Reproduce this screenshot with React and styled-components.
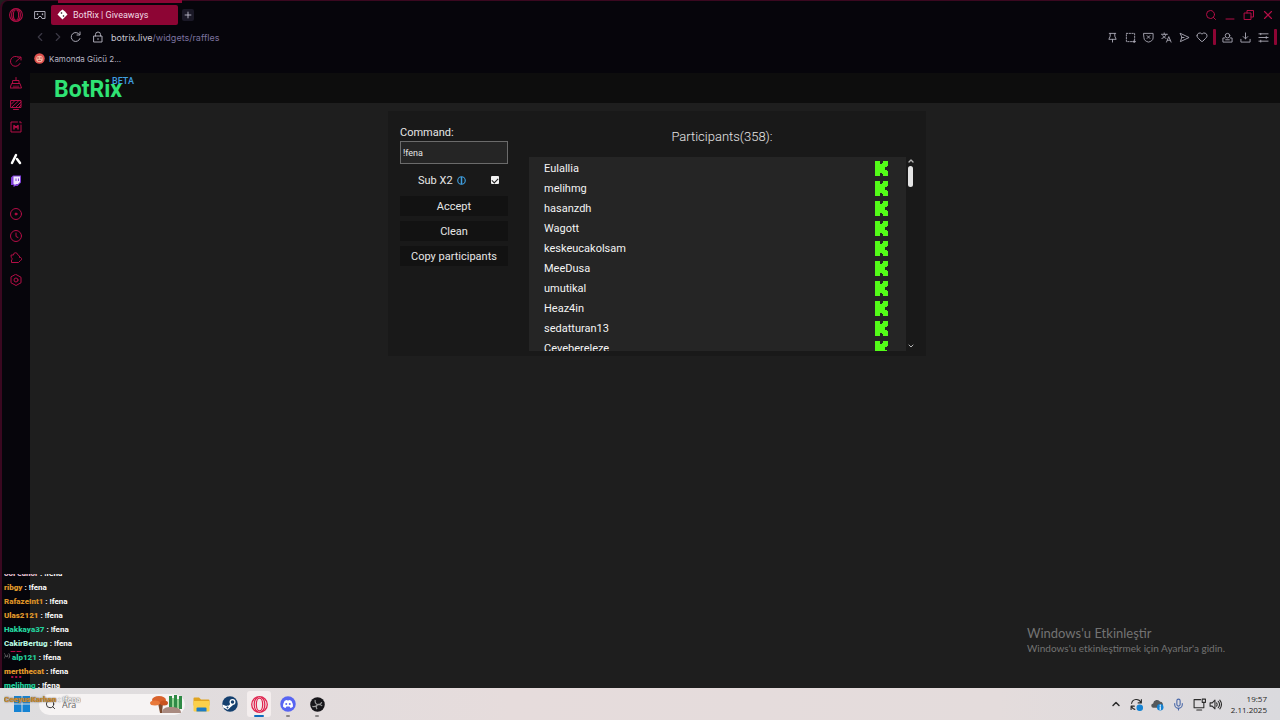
import React from "react";
import styled, { createGlobalStyle, css } from "styled-components";
import { Search, Plus, Heart, ChevronUp, ChevronDown, ChevronLeft, ChevronRight, X, Mic } from "lucide-react";

const GlobalStyle = createGlobalStyle`
  * {
    box-sizing: border-box;
  }

  body {
    margin: 0;
    background-color: #1e1e1e;
    font-family: Roboto, "Liberation Sans", sans-serif;
  }

  button {
    border: none;
    padding: 0;
    background: none;
    font-family: inherit;
    cursor: pointer;
  }
`;

const Desktop = styled.div`
  position: relative;
  min-height: 100vh;

  display: flex;
  flex-direction: column;
`;

const Browser = styled.div`
  position: relative;
  flex: 1;

  display: flex;
  background-color: #06050b;
  border-left: 2px solid #3a0820;
  border-top: 1px solid #3a0820;
  border-top-left-radius: 8px;
`;

const Sidebar = styled.nav`
  width: 28px;
  padding: 7px 0 4px;

  display: flex;
  flex-direction: column;
  align-items: center;
  color: #b30e46;
`;

const SideGroup = styled.div`
  margin-top: ${(props) => props.$top};

  display: flex;
  flex-direction: column;
  gap: 8px;
`;

const IconButton = styled.button`
  width: ${(props) => props.$size || "14px"};
  height: ${(props) => props.$size || "14px"};

  display: flex;
  align-items: center;
  justify-content: center;
  flex-shrink: 0;
  color: ${(props) => props.$color || "inherit"};
`;

const Main = styled.div`
  flex: 1;
  min-width: 0;

  display: flex;
  flex-direction: column;
`;

const TabRow = styled.div`
  height: 27px;
  padding: 0 5px 0 3px;

  display: flex;
  align-items: center;
  gap: 4px;
`;

const Tab = styled.div`
  width: 127px;
  height: 20px;
  padding: 0 6px;
  border-radius: 2px;

  display: flex;
  align-items: center;
  gap: 5px;
  background-color: #8d0534;
  color: #f1dbe4;
  font-size: 9px;
  white-space: nowrap;
`;

const TabIsland = styled.div`
  position: absolute;
  top: -1px;
  left: 56px;
  width: 124px;
  height: 3px;
  background-color: #8d0534;
`;

const NewTab = styled.button`
  width: 12px;
  height: 12px;
  border-radius: 2px;

  display: flex;
  align-items: center;
  justify-content: center;
  background-color: #1a1826;
  color: #c9c7d6;
`;

const WindowButtons = styled.div`
  margin-left: auto;

  display: flex;
  align-items: center;
  gap: 5px;
  color: #b30e46;
`;

const AddressRow = styled.div`
  height: 18px;
  padding: 0 3px;

  display: flex;
  align-items: center;
  gap: 4px;
  color: #aaa9b5;
`;

const Address = styled.a`
  margin-left: -2px;
  color: #7b729f;
  font-family: Inter, sans-serif;
  font-size: 9px;
  text-decoration: none;

  span {
    color: #c8c6d3;
  }
`;

const Tools = styled.div`
  margin-left: auto;

  display: flex;
  align-items: center;
  gap: 4px;
`;

const Separator = styled.span`
  width: 3px;
  height: 16px;
  border-radius: 1px;
  background-color: #8d0534;
`;

const BookmarkRow = styled.div`
  height: 27px;
  padding: 0 0 2px 4px;

  display: flex;
  align-items: center;
`;

const Bookmark = styled.a`
  display: flex;
  align-items: center;
  gap: 4px;
  color: #b9b7c4;
  font-family: Inter, sans-serif;
  font-size: 8px;
  text-decoration: none;
`;

const SiteHeader = styled.header`
  height: 30px;
  padding-left: 24px;

  display: flex;
  align-items: center;
  background-color: #0d0d0d;
`;

const Brand = styled.a`
  position: relative;
  margin-top: 3px;
  color: #2fe374;
  font-size: 23px;
  font-weight: 700;
  line-height: 28px;
  text-decoration: none;
`;

const Beta = styled.sup`
  position: absolute;
  top: 0;
  left: 58px;
  color: #3f9fe0;
  font-size: 9px;
  font-weight: 500;
  line-height: 10px;
`;

const Page = styled.main`
  flex: 1;
  padding: 8px 0 8px 4px;
  background-color: #1e1e1e;
`;

const Panel = styled.section`
  max-width: 538px;
  margin: 0 auto;
  padding: 12px 11px 5px 12px;

  display: flex;
  gap: 21px;
  background-color: #191919;
  color: #e6e6e6;
`;

const Controls = styled.form`
  width: 108px;
  padding-top: 3px;

  display: flex;
  flex-direction: column;
`;

const FieldLabel = styled.label`
  font-size: 11px;
  line-height: 14px;
`;

const TextInput = styled.input`
  width: 100%;
  height: 23px;
  margin-top: 1px;
  padding: 0 2px;
  border: 1px solid #6b6b6b;
  outline: none;
  background-color: #252525;
  color: #e6e6e6;
  font-family: inherit;
  font-size: 9px;
`;

const SubRow = styled.div`
  height: 32px;
  padding: 0 9px 0 18px;

  display: flex;
  align-items: center;
  font-size: 11px;

  label {
    margin-right: 4px;
  }
`;

const Checkbox = styled.input`
  appearance: none;
  width: 8px;
  height: 8px;
  margin: 0 0 0 auto;
  border-radius: 1px;

  display: grid;
  place-items: center;
  background-color: #f2f2f2;

  &:checked::before {
    content: "";
    width: 5px;
    height: 3px;
    margin-top: -1px;
    border-left: 1px solid #191919;
    border-bottom: 1px solid #191919;
    transform: rotate(-45deg);
  }
`;

const Actions = styled.div`
  display: flex;
  flex-direction: column;
  gap: 5px;
`;

const Button = styled.button`
  height: 20px;
  background-color: #121212;
  color: #e6e6e6;
  font-size: 11px;
`;

const Participants = styled.div`
  flex: 1;
  min-width: 0;
`;

const Title = styled.h2`
  margin: 0;
  font-size: 13px;
  font-weight: 300;
  line-height: 28px;
  text-align: center;
`;

const ListFrame = styled.div`
  height: 194px;
  margin-top: 6px;

  display: flex;
`;

const List = styled.ul`
  flex: 1;
  margin: 0;
  padding: 1px 17px 0 15px;
  overflow-y: auto;
  scrollbar-width: none;
  list-style: none;
  background-color: #252525;
`;

const Person = styled.li`
  height: 20px;

  display: flex;
  align-items: center;
  justify-content: space-between;
  color: #f4f4f4;
  font-size: 11px;
`;

const ScrollTrack = styled.div`
  width: 9px;
  padding: 0 0 1px;

  display: flex;
  flex-direction: column;
  align-items: center;
  color: #b5b5b5;
`;

const ScrollThumb = styled.div`
  width: 5px;
  height: 21px;
  margin: 1px 0 auto;
  border-radius: 3px;
  background-color: #e4e4e4;
`;

const Watermark = styled.div`
  position: absolute;
  right: 55px;
  bottom: 64px;
  color: #737373;
  font-family: Lato, sans-serif;
  font-size: 10px;
  line-height: 15px;

  strong {
    display: block;
    font-size: 13px;
    font-weight: 400;
  }
`;

const Chat = styled.ul`
  position: absolute;
  left: 4px;
  bottom: 13px;
  height: 133px;
  margin: 0;
  padding: 0;
  overflow: hidden;
  list-style: none;

  display: flex;
  flex-direction: column;
  justify-content: flex-end;
  color: #ffffff;
  font-size: 8px;
  font-weight: 700;
  line-height: 14px;
  pointer-events: none;
`;

const Message = styled.li`
  flex-shrink: 0;
  white-space: nowrap;

  svg {
    margin-right: 1px;
    margin-left: -1px;
  }

  b {
    color: ${(props) => props.$color};
  }

  ${(props) =>
    props.$fading &&
    css`
      color: #f4f1f1;
      text-shadow: 0 0 1px #666666, 0 0 2px #777777;
    `}
`;

const Taskbar = styled.footer`
  height: 32px;
  padding: 0 13px;

  display: flex;
  align-items: center;
  background: linear-gradient(90deg, #dedddf, #e6dcdc 40%, #e4dcdc 78%, #dadade);
`;

const SearchBox = styled.label`
  width: 146px;
  height: 21px;
  margin-left: 9px;
  padding: 0 1px 0 6px;
  border-radius: 11px;

  display: flex;
  align-items: center;
  gap: 6px;
  background-color: #f6f3f3;
  color: #2b2b2b;

  input {
    flex: 1;
    min-width: 0;
    padding: 0;
    border: none;
    outline: none;
    background: none;
    font-family: "Open Sans", sans-serif;
    font-size: 9px;
  }

  input::placeholder {
    color: #666666;
  }
`;

const Apps = styled.div`
  margin-left: 4px;

  display: flex;
  gap: 5px;
`;

const AppButton = styled.button`
  position: relative;
  width: 24px;
  height: 26px;
  border-radius: 3px;

  display: flex;
  align-items: center;
  justify-content: center;
  background-color: ${(props) => (props.$active ? "#f4eeee" : "transparent")};

  &::after {
    content: "";
    position: absolute;
    bottom: 0;
    width: ${(props) => (props.$active ? "10px" : "4px")};
    height: 2px;
    border-radius: 1px;
    background-color: ${(props) => (props.$active ? "#0f6cbd" : "#8a8686")};
    opacity: ${(props) => (props.$running || props.$active ? 1 : 0)};
  }
`;

const Tray = styled.div`
  margin-left: auto;

  display: flex;
  align-items: center;
  gap: 7px;
  color: #2b2b2b;
`;

const QuickSettings = styled.div`
  display: flex;
  gap: 2px;
`;

const Clock = styled.time`
  margin-left: 1px;
  font-family: "Open Sans", sans-serif;
  font-size: 8px;
  line-height: 11px;
  text-align: right;
  color: #1f1f1f;
`;

const Icon = ({ size = 12, children, ...rest }) => (
  <svg
    width={size}
    height={size}
    viewBox="0 0 24 24"
    fill="none"
    stroke="currentColor"
    strokeWidth="2"
    strokeLinecap="round"
    strokeLinejoin="round"
    aria-hidden="true"
    {...rest}
  >
    {children}
  </svg>
);

const OperaIcon = ({ size, color = "currentColor" }) => (
  <Icon size={size} stroke={color} strokeWidth="1.8">
    <circle cx="12" cy="12" r="11" />
    <ellipse cx="12" cy="12" rx="4.500" ry="9" />
    <path d="M9 2C3 6 3 18 9 22M15 2C21 6 21 18 15 22" />
  </Icon>
);

const KickIcon = () => (
  <svg width="14" height="15" viewBox="0 0 14 15" fill="#53fc18" aria-hidden="true">
    <path d="M0 0H5V3H7V2H8V0H13V5H12V6H10V9H12V10H13V15H8V13H7V12H5V15H0Z" />
  </svg>
);

const sideTop = [
  {
    name: "Speed dial",
    art: <path d="M20 17a10 10 0 1 1-4-13M12 13l9-8M16 4h6v6" />,
  },
  {
    name: "Cleaner",
    art: <path d="M12 1v6M9 7h6M6 7h12v6H6zM4 13h16l3 9H1zM8 18v3M12 18v3M16 18v3" />,
  },
  {
    name: "Wallpapers",
    art: (
      <>
        <path d="M2 3h20v14H2zM7 21h10" />
        <path d="M3 10l7-7M4 16L17 4M11 17L22 6M17 17l5-5" />
      </>
    ),
  },
  {
    name: "Mods",
    art: (
      <>
        <path d="M15 2H2v20h20V8M19 2h3v2" />
        <path d="M8 16V9l4 4 4-4v7" strokeWidth="3" />
      </>
    ),
  },
];

const sideBottom = [
  {
    name: "Player",
    art: (
      <>
        <circle cx="12" cy="12" r="11" />
        <circle cx="12" cy="12" r="2" fill="currentColor" />
      </>
    ),
  },
  {
    name: "History",
    art: (
      <>
        <circle cx="12" cy="12" r="11" />
        <path d="M12 6v7l4 2" />
      </>
    ),
  },
  {
    name: "Extensions",
    art: <path d="M3 6h4a4 4 0 0 1 8-1l4 3v3a3 3 0 0 1 2 6l-4 4H3v-5a3 3 0 0 0 0-5z" />,
  },
  {
    name: "Settings",
    art: (
      <>
        <path d="M12 1l10 5.500v11L12 23 2 17.500v-11z" />
        <circle cx="12" cy="12" r="4" />
      </>
    ),
  },
];

const sideFooter = [
  { name: "Tips", art: <path d="M2 5h8M14 5h8" /> },
  { name: "Sidebar setup", art: <path d="M4 12h1M12 12h1M20 12h1" strokeWidth="4" /> },
];

const tools = [
  { name: "Pin", art: <path d="M5 3h14M7 3v6l-3 7h16l-3-7V3M12 16v6" /> },
  {
    name: "Snapshot",
    art: (
      <>
        <path d="M3 3h18v18H3z" strokeDasharray="3 3" />
        <path d="M17 21h6M20 18v6" />
      </>
    ),
  },
  { name: "Ad blocker", art: <path d="M2 3h20v10c0 5-5 8-10 9-5-1-10-4-10-9zM9 8l6 6M15 8l-6 6" /> },
  { name: "Translate", art: <path d="M1 5h13M7 2v3M11 5c-1 5-5 8-9 9M4 8c2 4 5 5 7 6M12 22l5-12 5 12M14 18h6" /> },
  { name: "Send", art: <path d="M3 3l19 9-19 9 3-9zM6 12h5" /> },
];

const accountTools = [
  {
    name: "Account",
    art: (
      <>
        <circle cx="12" cy="8" r="5" />
        <path d="M6 13H2v9h20v-9h-4M8 17h8" />
      </>
    ),
  },
  { name: "Downloads", art: <path d="M12 2v13M7 10l5 5 5-5M2 16v6h20v-6" /> },
  { name: "Easy setup", art: <path d="M2 4h20M2 12h20M2 20h20M6 3v3M18 10v4M6 18v4" /> },
];

const participants = [
  "Eulallia",
  "melihmg",
  "hasanzdh",
  "Wagott",
  "keskeucakolsam",
  "MeeDusa",
  "umutikal",
  "Heaz4in",
  "sedatturan13",
  "Cevebereleze",
];

const messages = [
  { name: "ooFeanor", color: "#e3bfd0" },
  { name: "ribgy", color: "#e0982a" },
  { name: "RafazeInt1", color: "#d98f25" },
  { name: "Ulas2121", color: "#e0982a" },
  { name: "Hakkaya37", color: "#23cf9b" },
  { name: "CakirBertug", color: "#b5f3df" },
  { name: "alp121", color: "#23cf9b", badge: true },
  { name: "mertthecat", color: "#e0982a" },
  { name: "melihmg", color: "#23cf9b" },
  { name: "CeeyusKarhan", color: "#c98a2e", fading: true },
];

const SideBar = () => (
  <Sidebar>
    <IconButton aria-label="Opera menu">
      <OperaIcon size={14} />
    </IconButton>
    <SideGroup $top="32px">
      {sideTop.map((item) => (
        <IconButton key={item.name} aria-label={item.name}>
          <Icon>{item.art}</Icon>
        </IconButton>
      ))}
    </SideGroup>
    <SideGroup $top="18px">
      <IconButton aria-label="Aria" $color="#ffffff">
        <Icon size={12} strokeWidth="5">
          <path d="M12 4L4 20M14 12l6 8" />
        </Icon>
      </IconButton>
      <IconButton aria-label="Twitch">
        <svg width="12" height="12" viewBox="0 0 24 24" aria-hidden="true">
          <path d="M2 5l4-4h16v14l-7 7h-4l-4 2v-4H2z" fill="#7d3fd6" />
          <path d="M7 3h13v11l-4 4h-4l-3 3v-3H7z" fill="#efe6ff" />
          <path d="M12 7v5M17 7v5" stroke="#7d3fd6" strokeWidth="2" />
        </svg>
      </IconButton>
    </SideGroup>
    <SideGroup $top="19px">
      {sideBottom.map((item) => (
        <IconButton key={item.name} aria-label={item.name}>
          <Icon>{item.art}</Icon>
        </IconButton>
      ))}
    </SideGroup>
    <SideGroup $top="auto">
      {sideFooter.map((item) => (
        <IconButton key={item.name} aria-label={item.name}>
          <Icon>{item.art}</Icon>
        </IconButton>
      ))}
    </SideGroup>
  </Sidebar>
);

const Chrome = () => (
  <>
    <TabIsland />
    <TabRow>
      <IconButton aria-label="Workspace" $color="#aaa9b5">
        <Icon>
          <path d="M2 5h20v14h-6l-2-4h-4l-2 4H2z" />
          <path d="M7 10v1M17 10v1" strokeWidth="3" />
        </Icon>
      </IconButton>
      <Tab>
        <svg width="11" height="11" viewBox="0 0 22 22" aria-hidden="true">
          <path d="M11 1l5 4 5 6-5 5-5 5-5-5-5-5 5-6z" fill="#ffffff" />
          <path d="M9 6l2 2-2 2-2-2zM13 12l2 2-2 2-2-2z" fill="#33222b" />
        </svg>
        BotRix | Giveaways
      </Tab>
      <NewTab aria-label="New tab">
        <Plus size={10} />
      </NewTab>
      <WindowButtons>
        <IconButton aria-label="Search tabs">
          <Search size={12} />
        </IconButton>
        <IconButton aria-label="Minimize">
          <Icon>
            <path d="M4 20h16" />
          </Icon>
        </IconButton>
        <IconButton aria-label="Restore">
          <Icon>
            <path d="M3 8h13v13H3zM8 8V3h13v13h-5" />
          </Icon>
        </IconButton>
        <IconButton aria-label="Close">
          <X size={14} />
        </IconButton>
      </WindowButtons>
    </TabRow>
    <AddressRow>
      <IconButton aria-label="Back" $color="#3b3945">
        <ChevronLeft size={14} />
      </IconButton>
      <IconButton aria-label="Forward" $color="#3b3945">
        <ChevronRight size={14} />
      </IconButton>
      <IconButton aria-label="Reload">
        <Icon>
          <path d="M20 15a9 9 0 1 1-1-8M20 2v6h-6" />
        </Icon>
      </IconButton>
      <IconButton aria-label="Site information" $size="22px">
        <Icon>
          <path d="M4 10h16v12H4zM7 10V7a5 5 0 0 1 10 0v3M12 15v2" />
        </Icon>
      </IconButton>
      <Address href="#raffles">
        <span>botrix.live</span>/widgets/raffles
      </Address>
      <Tools>
        {tools.map((tool) => (
          <IconButton key={tool.name} aria-label={tool.name}>
            <Icon size={11}>{tool.art}</Icon>
          </IconButton>
        ))}
        <IconButton aria-label="Favourites">
          <Heart size={12} />
        </IconButton>
        <Separator />
        {accountTools.map((tool) => (
          <IconButton key={tool.name} aria-label={tool.name}>
            <Icon size={11}>{tool.art}</Icon>
          </IconButton>
        ))}
        <Separator />
      </Tools>
    </AddressRow>
    <BookmarkRow>
      <Bookmark href="#bookmark">
        <svg width="11" height="11" viewBox="0 0 22 22" aria-hidden="true">
          <circle cx="11" cy="11" r="10.500" fill="#e0524f" />
          <circle cx="11" cy="12" r="6.500" fill="#f3b49c" />
          <path d="M6 10h4M12 10h4M8 15h6" stroke="#c8505a" strokeWidth="2" />
        </svg>
        Kamonda Gücü 2...
      </Bookmark>
    </BookmarkRow>
  </>
);

const RafflePanel = () => (
  <Panel>
    <Controls onSubmit={(e) => e.preventDefault()}>
      <FieldLabel htmlFor="command">Command:</FieldLabel>
      <TextInput id="command" type="text" defaultValue="!fena" />
      <SubRow>
        <label htmlFor="sub-x2">Sub X2</label>
        <Icon size={9} stroke="#3f9fe0" strokeWidth="3">
          <circle cx="12" cy="12" r="10" />
          <path d="M12 4v16" strokeWidth="4" />
        </Icon>
        <Checkbox id="sub-x2" type="checkbox" defaultChecked />
      </SubRow>
      <Actions>
        <Button type="submit">Accept</Button>
        <Button type="button">Clean</Button>
        <Button type="button">Copy participants</Button>
      </Actions>
    </Controls>
    <Participants>
      <Title>Participants(358):</Title>
      <ListFrame>
        <List>
          {participants.map((name) => (
            <Person key={name}>
              {name}
              <KickIcon />
            </Person>
          ))}
        </List>
        <ScrollTrack>
          <ChevronUp size={8} strokeWidth={4} />
          <ScrollThumb />
          <ChevronDown size={8} strokeWidth={3} />
        </ScrollTrack>
      </ListFrame>
    </Participants>
  </Panel>
);

const ChatOverlay = () => (
  <Chat>
    {messages.map((message) => (
      <Message key={message.name} $color={message.color} $fading={message.fading}>
        {message.badge && (
          <Icon size={8} stroke="#8d8d8d">
            <path d="M4 5c-3 4-3 9 0 13M18 5c3 4 3 9 0 13M8 9v5h6V9" />
          </Icon>
        )}
        <b>{message.name}</b> : !fena
      </Message>
    ))}
  </Chat>
);

const WindowsTaskbar = () => (
  <Taskbar>
    <IconButton aria-label="Start" $size="17px">
      <svg width="16" height="16" viewBox="0 0 16 16" fill="#1583d3" aria-hidden="true">
        <path d="M0 0h7.500v7.500H0zM8.500 0H16v7.500H8.500zM0 8.500h7.500V16H0zM8.500 8.500H16V16H8.500z" />
      </svg>
    </IconButton>
    <SearchBox>
      <Search size={11} />
      <input type="text" placeholder="Ara" aria-label="Ara" />
      <svg width="34" height="18" viewBox="0 0 34 18" aria-hidden="true">
        <path d="M8 8l2 10h2l1-10z" fill="#7c4a2d" />
        <ellipse cx="9" cy="5" rx="7" ry="4" fill="#d9622b" />
        <ellipse cx="5" cy="8" rx="5" ry="2.500" fill="#e8793a" />
        <ellipse cx="14" cy="8" rx="4" ry="2.500" fill="#c9541f" />
        <path d="M19 1h3v12h-3zM24 0h3v13h-3zM29 1h3v13h-3z" fill="#2f8a45" />
        <path d="M22 3h2v10h-2zM27 4h2v9h-2z" fill="#8fd08f" />
        <path d="M12 18c0-5 4-6 9-6 7 0 10 2 10 6z" fill="#a98a80" />
      </svg>
    </SearchBox>
    <Apps>
      <AppButton aria-label="Explorer">
        <svg width="17" height="15" viewBox="0 0 34 30" aria-hidden="true">
          <path d="M1 3q0-2 2-2h9l4 4h15q2 0 2 2v10H1z" fill="#e0a420" />
          <path d="M1 8h32v19q0 2-2 2H3q-2 0-2-2z" fill="#fbd04a" />
          <path d="M7 29v-6q0-2 2-2h16q2 0 2 2v6z" fill="#1d7cc4" />
        </svg>
      </AppButton>
      <AppButton aria-label="Steam">
        <svg width="16" height="16" viewBox="0 0 32 32" aria-hidden="true">
          <circle cx="16" cy="16" r="15.500" fill="#15406f" />
          <path d="M1 17l10 4 7-6 4 3-7 6-4 3-9-4z" fill="#ffffff" />
          <circle cx="21" cy="12" r="6" fill="#ffffff" />
          <circle cx="21" cy="12" r="3.500" fill="#15406f" />
          <circle cx="11" cy="23" r="4" fill="#ffffff" />
          <circle cx="11" cy="23" r="2" fill="#15406f" />
        </svg>
      </AppButton>
      <AppButton aria-label="Opera GX" $active>
        <OperaIcon size={17} color="#e0244f" />
      </AppButton>
      <AppButton aria-label="Discord" $running>
        <svg width="16" height="16" viewBox="0 0 32 32" aria-hidden="true">
          <circle cx="16" cy="16" r="15.500" fill="#5865f2" />
          <path d="M9 10q3-2 5-2l1 1h2l1-1q2 0 5 2 3 5 3 11-2 2-5 3l-2-3h-6l-2 3q-3-1-5-3 0-6 3-11z" fill="#ffffff" />
          <circle cx="12.500" cy="16" r="2" fill="#5865f2" />
          <circle cx="19.500" cy="16" r="2" fill="#5865f2" />
        </svg>
      </AppButton>
      <AppButton aria-label="OBS" $running>
        <svg width="15" height="15" viewBox="0 0 32 32" aria-hidden="true">
          <circle cx="16" cy="16" r="15.500" fill="#17161a" />
          <path
            d="M11 6q-1 8 5 10 7 1 9-5M26 19q-6-5-10-3-5 5-1 10M5 20q8 2 11-4"
            fill="none"
            stroke="#9a9a9a"
            strokeWidth="2.500"
          />
        </svg>
      </AppButton>
    </Apps>
    <Tray>
      <IconButton aria-label="Hidden icons">
        <ChevronUp size={12} strokeWidth={3} />
      </IconButton>
      <IconButton aria-label="Update">
        <Icon size={13}>
          <path d="M3 10a9 9 0 0 1 17-2M21 3v6h-6M2 21v-6h6M3 16a9 9 0 0 0 6 5" />
          <circle cx="18" cy="18" r="5" fill="#1583d3" stroke="#1583d3" />
        </Icon>
      </IconButton>
      <IconButton aria-label="OneDrive">
        <Icon size={13} stroke="none">
          <path d="M5 18a4 4 0 0 1-1-8 7 7 0 0 1 13-3 5 5 0 0 1 4 8l-2 3z" fill="#55595c" />
          <circle cx="17" cy="17" r="6" fill="#1583d3" />
          <path d="M17 13v1M17 16v5" stroke="#ffffff" />
        </Icon>
      </IconButton>
      <IconButton aria-label="Microphone" $color="#4766a8">
        <Mic size={13} />
      </IconButton>
      <QuickSettings>
        <IconButton aria-label="Network">
          <Icon size={13}>
            <path d="M14 3H2v15h18v-6M7 22h9M17 2h6v6h-6zM20 8v5" />
          </Icon>
        </IconButton>
        <IconButton aria-label="Volume">
          <Icon size={13}>
            <path d="M2 9h4l5-5v16l-5-5H2zM14 9q2 3 0 6M17 6q5 6 0 12M20 4q6 8 0 16" />
          </Icon>
        </IconButton>
      </QuickSettings>
      <Clock>
        19:57
        <br />
        2.11.2025
      </Clock>
    </Tray>
  </Taskbar>
);

const App = () => {
  return (
    <Desktop>
      <GlobalStyle />
      <Browser>
        <SideBar />
        <Main>
          <Chrome />
          <SiteHeader>
            <Brand href="#home">
              BotRix
              <Beta>BETA</Beta>
            </Brand>
          </SiteHeader>
          <Page>
            <RafflePanel />
          </Page>
        </Main>
      </Browser>
      <WindowsTaskbar />
      <Watermark>
        <strong>Windows'u Etkinleştir</strong>
        Windows'u etkinleştirmek için Ayarlar'a gidin.
      </Watermark>
      <ChatOverlay />
    </Desktop>
  );
};

export default App;
